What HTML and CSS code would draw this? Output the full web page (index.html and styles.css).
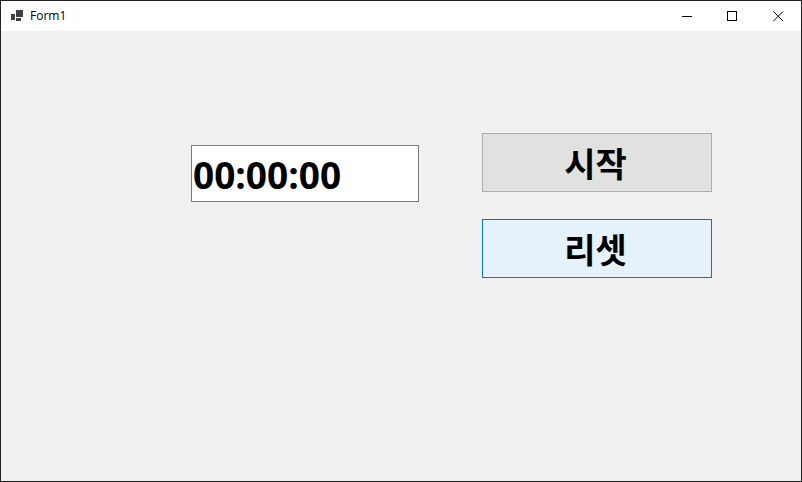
FILE: index.html
```html
<!DOCTYPE html>
<html lang="ko">
<head>
  <meta charset="UTF-8">
  <title>Form1</title>
  <meta name="viewport" content="width=device-width, initial-scale=1">
  <link rel="stylesheet" href="styles.css">
</head>
<body>
<div class="window">
  <header class="title-bar">
    <svg class="app-icon" width="13" height="12" viewBox="0 0 13 12" shape-rendering="crispEdges" aria-hidden="true">
      <path d="M5 0h7v7H5zM0 4h4v6H0zM5 8h5v3H5z"/>
    </svg>
    <h1 class="title">Form1</h1>
    <button class="caption-button" type="button" aria-label="최소화">
      <svg width="11" height="11" viewBox="0 0 11 11" shape-rendering="crispEdges"><path d="M0 5.5h10"/></svg>
    </button>
    <button class="caption-button" type="button" aria-label="최대화">
      <svg width="11" height="11" viewBox="0 0 11 11" shape-rendering="crispEdges"><path d="M.5 .5h9v9h-9z"/></svg>
    </button>
    <button class="caption-button close" type="button" aria-label="닫기">
      <svg width="11" height="11" viewBox="0 0 11 11"><path d="M.5 .5l9.500 9.500M10 .5L.5 10"/></svg>
    </button>
  </header>
  <main class="form">
    <input class="time" type="text" value="00:00:00" aria-label="시간">
    <div class="buttons">
      <button class="button" type="button">시작</button>
      <button class="button active" type="button">리셋</button>
    </div>
  </main>
</div>
</body>
</html>
```
FILE: styles.css
```css
* {
    box-sizing: border-box;
}

body {
    margin: 0;
    font-family: "Open Sans", "Noto Sans CJK KR", sans-serif;
    color: #000;
}

.window {
    display: flex;
    flex-direction: column;
    min-height: 100vh;
    border: 1px solid #222022;
    background-color: #f0f0f0;
}

.title-bar {
    display: flex;
    align-items: center;
    height: 30px;
    padding-left: 10px;
    background-color: #fff;
}

.app-icon {
    fill: #404040;
}

.title {
    flex: 1;
    margin: 0 0 0 6px;
    font-size: 12px;
    font-weight: 400;
    line-height: 16px;
}

.caption-button {
    display: flex;
    align-items: center;
    justify-content: center;
    width: 45px;
    height: 30px;
    padding: 0;
    border: 0;
    background: none;
}

.caption-button.close {
    width: 46px;
}

.caption-button svg {
    fill: none;
    stroke: #000;
}

.form {
    display: grid;
    grid-template-columns: 228fr 230fr;
    align-items: start;
    flex: 1;
    gap: 63px;
    padding: 102px 89px 0 190px;
}

.time {
    width: 100%;
    min-width: 0;
    height: 57px;
    margin-top: 12px;
    padding: 2px 1px 0;
    border: 1px solid #7a7a7a;
    background-color: #fff;
    color: #000;
    font-family: inherit;
    font-size: 37px;
    font-weight: 700;
    line-height: 50px;
}

.buttons {
    display: flex;
    flex-direction: column;
    gap: 27px;
}

.button {
    height: 59px;
    padding: 2px 3px 0 0;
    border: 1px solid #adadad;
    background-color: #e1e1e1;
    color: #000;
    font-family: inherit;
    font-size: 34px;
    font-weight: 600;
    line-height: 50px;
}

.button.active {
    border-color: #0078d7;
    background-color: #e5f1fb;
}
```
